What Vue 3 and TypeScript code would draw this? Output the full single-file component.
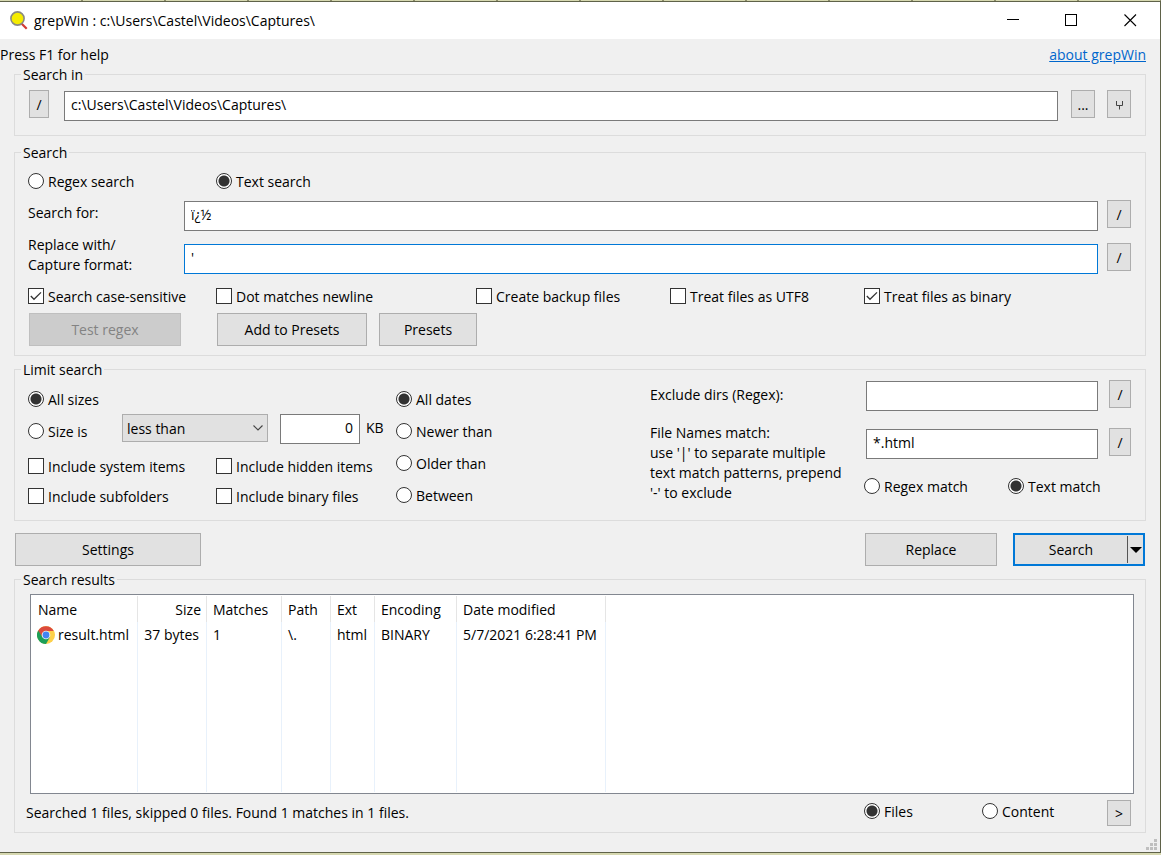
<script setup lang="ts">
import { ref } from 'vue'

interface ResultRow {
  name: string
  size: string
  matches: number
  path: string
  ext: string
  encoding: string
  modified: string
}

const searchPath = ref('c:\\Users\\Castel\\Videos\\Captures\\')
const searchMode = ref('text')
const searchFor = ref('ï¿½')
const replaceWith = ref("'")
const options = ref([
  { id: 'case', label: 'Search case-sensitive', on: true },
  { id: 'dot', label: 'Dot matches newline', on: false },
  { id: 'backup', label: 'Create backup files', on: false },
  { id: 'utf8', label: 'Treat files as UTF8', on: false },
  { id: 'binary', label: 'Treat files as binary', on: true },
])
const sizeMode = ref('all')
const sizeCompare = ref('less than')
const sizeValue = ref('0')
const includes = ref([
  { id: 'system', label: 'Include system items', on: false },
  { id: 'hidden', label: 'Include hidden items', on: false },
  { id: 'subfolders', label: 'Include subfolders', on: false },
  { id: 'binaries', label: 'Include binary files', on: false },
])
const dateMode = ref('All dates')
const dateModes = ['All dates', 'Newer than', 'Older than', 'Between']
const excludeDirs = ref('')
const fileNames = ref('*.html')
const nameMode = ref('text')
const view = ref('files')
const rows: ResultRow[] = [
  {
    name: 'result.html',
    size: '37 bytes',
    matches: 1,
    path: '\\.',
    ext: 'html',
    encoding: 'BINARY',
    modified: '5/7/2021 6:28:41 PM',
  },
]
</script>

<template>
  <div class="desktop">
    <main class="window">
      <header class="titlebar">
        <svg class="app-icon" width="20" height="20" viewBox="0 0 20 20" aria-hidden="true">
          <path d="M12.5 12.5 L17.7 17.7" stroke="#d33a32" stroke-width="2.2" />
          <circle cx="8.5" cy="7.5" r="6.6" fill="#f5ec00" stroke="#8a8a80" stroke-width="1.6" />
        </svg>
        <h1>grepWin : c:\Users\Castel\Videos\Captures\</h1>
        <button class="caption" aria-label="Minimize">
          <svg width="13" height="13" viewBox="0 0 13 13"><path d="M1 5.5H13" stroke="#000" /></svg>
        </button>
        <button class="caption" aria-label="Maximize">
          <svg width="13" height="13" viewBox="0 0 13 13"><rect x=".5" y=".5" width="11" height="11" fill="none" stroke="#000" /></svg>
        </button>
        <button class="caption" aria-label="Close">
          <svg width="13" height="13" viewBox="0 0 13 13"><path d="M.5 .5L12 12M12 .5L.5 12" stroke="#000" stroke-width="1.1" /></svg>
        </button>
      </header>

      <div class="help">
        <span>Press F1 for help</span>
        <a href="#about">about grepWin</a>
      </div>

      <fieldset class="group in-group">
        <legend>Search in</legend>
        <div class="path-row">
          <button class="btn mini" aria-label="Path history">/</button>
          <input v-model="searchPath" class="box" type="text" aria-label="Search in" />
          <button class="btn mini" aria-label="Browse">...</button>
          <button class="btn mini" aria-label="Branch">
            <svg width="7" height="9" viewBox="0 0 7 9"><path d="M.5 0V4.5H6.5V0M3.5 4.5V8.5" fill="none" stroke="#444" /></svg>
          </button>
        </div>
      </fieldset>

      <fieldset class="group search-group">
        <legend>Search</legend>
        <div class="mode-row">
          <label class="choice"><input v-model="searchMode" type="radio" name="mode" value="regex" />Regex search</label>
          <label class="choice"><input v-model="searchMode" type="radio" name="mode" value="text" />Text search</label>
        </div>
        <div class="field">
          <label for="search-for">Search for:</label>
          <input id="search-for" v-model="searchFor" class="box" type="text" />
          <button class="btn mini" aria-label="Edit search text">/</button>
        </div>
        <div class="field tall">
          <label for="replace-with">Replace with/<br />Capture format:</label>
          <input id="replace-with" v-model="replaceWith" class="box active" type="text" />
          <button class="btn mini" aria-label="Edit replacement">/</button>
        </div>
        <div class="option-row">
          <label v-for="o in options" :key="o.id" class="choice"><input v-model="o.on" type="checkbox" />{{ o.label }}</label>
        </div>
        <div class="preset-row">
          <button class="btn test" disabled>Test regex</button>
          <button class="btn add">Add to Presets</button>
          <button class="btn presets">Presets</button>
        </div>
      </fieldset>

      <fieldset class="group limit-group">
        <legend>Limit search</legend>
        <div class="limit-grid">
          <div class="sizes">
            <label class="choice"><input v-model="sizeMode" type="radio" name="size" value="all" />All sizes</label>
            <div class="size-row">
              <label class="choice"><input v-model="sizeMode" type="radio" name="size" value="is" />Size is</label>
              <span class="select">
                <select v-model="sizeCompare" aria-label="Size comparison">
                  <option>less than</option>
                  <option>equal to</option>
                  <option>greater than</option>
                </select>
                <svg width="10" height="6" viewBox="0 0 10 6" aria-hidden="true"><path d="M.5 .5L5 5L9.5 .5" fill="none" stroke="#444" stroke-width="1.1" /></svg>
              </span>
              <input id="size-value" v-model="sizeValue" class="box number" type="text" />
              <label for="size-value" class="unit">KB</label>
            </div>
            <div class="include-grid">
              <label v-for="i in includes" :key="i.id" class="choice"><input v-model="i.on" type="checkbox" />{{ i.label }}</label>
            </div>
          </div>
          <div class="dates">
            <label v-for="d in dateModes" :key="d" class="choice"><input v-model="dateMode" type="radio" name="date" :value="d" />{{ d }}</label>
          </div>
          <div class="names">
            <label for="exclude" class="exclude-label">Exclude dirs (Regex):</label>
            <div class="name-field">
              <input id="exclude" v-model="excludeDirs" class="box" type="text" />
              <button class="btn mini" aria-label="Exclude history">/</button>
            </div>
            <label for="file-names" class="names-label">File Names match:<br />use '|' to separate multiple<br />text match patterns, prepend<br />'-' to exclude</label>
            <div class="match">
              <div class="name-field">
                <input id="file-names" v-model="fileNames" class="box" type="text" />
                <button class="btn mini" aria-label="File name history">/</button>
              </div>
              <div class="match-modes">
                <label class="choice"><input v-model="nameMode" type="radio" name="names" value="regex" />Regex match</label>
                <label class="choice"><input v-model="nameMode" type="radio" name="names" value="text" />Text match</label>
              </div>
            </div>
          </div>
        </div>
      </fieldset>

      <div class="actions">
        <button class="btn settings">Settings</button>
        <button class="btn replace">Replace</button>
        <div class="split">
          <button class="split-main">Search</button>
          <button class="split-arrow" aria-label="More search actions">
            <svg width="12" height="6" viewBox="0 0 12 6"><path d="M0 0H12L6 6Z" fill="#000" /></svg>
          </button>
        </div>
      </div>

      <fieldset class="group results-group">
        <legend>Search results</legend>
        <div class="list">
          <table>
            <colgroup>
              <col class="c-name" /><col class="c-size" /><col class="c-matches" /><col class="c-path" />
              <col class="c-ext" /><col class="c-encoding" /><col class="c-date" />
            </colgroup>
            <thead>
              <tr>
                <th>Name</th>
                <th class="right">Size</th>
                <th>Matches</th>
                <th>Path</th>
                <th>Ext</th>
                <th>Encoding</th>
                <th>Date modified</th>
              </tr>
            </thead>
            <tbody>
              <tr v-for="r in rows" :key="r.name">
                <td>
                  <span class="file">
                    <svg width="18" height="18" viewBox="0 0 18 18" aria-hidden="true">
                      <circle cx="9" cy="9" r="9" fill="#fdd04a" />
                      <path d="M9 9L1.2 4.5A9 9 0 0 0 9 18L13 11Z" fill="#1c9f58" />
                      <path d="M1.2 4.5A9 9 0 0 1 16.8 4.9H9L5.4 11Z" fill="#dc4a3d" />
                      <circle cx="9" cy="9" r="4.3" fill="#f4f4f4" />
                      <circle cx="9" cy="9" r="3.4" fill="#4384f3" />
                    </svg>
                    {{ r.name }}
                  </span>
                </td>
                <td class="right">{{ r.size }}</td>
                <td>{{ r.matches }}</td>
                <td>{{ r.path }}</td>
                <td>{{ r.ext }}</td>
                <td>{{ r.encoding }}</td>
                <td>{{ r.modified }}</td>
              </tr>
              <tr class="rest" aria-hidden="true">
                <td v-for="n in 7" :key="n"></td>
              </tr>
            </tbody>
          </table>
        </div>
        <div class="status">
          <output>Searched 1 files, skipped 0 files. Found 1 matches in 1 files.</output>
          <label class="choice files"><input v-model="view" type="radio" name="view" value="files" />Files</label>
          <label class="choice content"><input v-model="view" type="radio" name="view" value="content" />Content</label>
          <button class="btn mini" aria-label="Next">&gt;</button>
        </div>
      </fieldset>

      <footer class="grip">
        <svg width="11" height="11" viewBox="0 0 11 11" fill="#bfbfbf" aria-hidden="true">
          <path d="M8 0h3v3h-3zM4 4h3v3h-3zM8 4h3v3h-3zM0 8h3v3h-3zM4 8h3v3h-3zM8 8h3v3h-3z" />
        </svg>
      </footer>
    </main>
  </div>
</template>

<style>
body {
  margin: 0;
}
</style>

<style scoped>
* {
  box-sizing: border-box;
}
.desktop {
  min-height: 100vh;
  display: flex;
  padding: 1px 0 2px;
  background: repeating-linear-gradient(90deg, #d6d8b0 0 81px, #8b8c6a 81px 83px);
  background-color: #d6d8b0;
  background-size: 100% 1px;
  background-repeat: no-repeat;
  font: 14px/20px "Open Sans", "Noto Sans", sans-serif;
  color: #000;
}
.window {
  flex: 1;
  min-width: 0;
  display: flex;
  flex-direction: column;
  background: #f0f0f0;
  border: solid #5f6249;
  border-width: 1px 1px 1px 0;
}
button,
input,
select {
  font: inherit;
  color: inherit;
  margin: 0;
}
.titlebar {
  display: flex;
  align-items: center;
  height: 37px;
  padding-left: 9px;
  background: #fff;
}
h1 {
  flex: 1;
  margin: 0 0 0 5px;
  font: inherit;
}
.caption {
  display: grid;
  place-items: center;
  width: 59px;
  height: 37px;
  padding: 0;
  border: 0;
  background: none;
}
.help {
  display: flex;
  justify-content: space-between;
  padding: 6px 14px 0 0;
}
.help a {
  color: #0066cc;
}
.group {
  display: flex;
  flex-direction: column;
  min-width: 0;
  margin: 0 14px;
  padding: 0 14px 0 13px;
  border: 1px solid #dcdcdc;
}
legend {
  margin-left: -7px;
  padding: 0 2px;
  height: 19px;
}
.box {
  min-width: 0;
  height: 30px;
  padding: 0 6px 4px;
  border: 1px solid #7a7a7a;
  border-radius: 0;
  background: #fff;
  outline: none;
}
.box.active {
  border-color: #0078d7;
}
.btn {
  height: 33px;
  padding: 0;
  border: 1px solid #adadad;
  border-radius: 0;
  background: #e1e1e1;
}
.btn:disabled {
  color: #838383;
  background: #cccccc;
  border-color: #bfbfbf;
}
.mini {
  flex: none;
  width: 24px;
  height: 28px;
  padding-top: 2px;
}
.choice {
  display: flex;
  align-items: flex-start;
  gap: 4px;
  height: 20px;
  line-height: 22px;
  white-space: nowrap;
}
.choice input {
  appearance: none;
  flex: none;
  width: 16px;
  height: 16px;
  margin-top: 2px;
  border: 1px solid #333;
  background: #fff;
}
.choice input[type="radio"] {
  border-radius: 50%;
}
.choice input[type="radio"]:checked {
  background: radial-gradient(circle, #333 0 5px, #fff 6px);
}
.choice input[type="checkbox"]:checked {
  background: #fff url("data:image/svg+xml,%3Csvg xmlns='http://www.w3.org/2000/svg' viewBox='0 0 14 14'%3E%3Cpath d='M1.8 7L5 10.3L12 3.4' fill='none' stroke='%23333' stroke-width='1.3'/%3E%3C/svg%3E");
}
.in-group {
  padding-bottom: 14px;
}
.path-row {
  display: flex;
  padding: 6px 0 0 1px;
}
.path-row .mini:first-child {
  width: 20px;
}
.path-row .box {
  flex: 1;
  margin: 1px 13px 0 15px;
}
.path-row .mini:last-child {
  margin-left: 12px;
}
.search-group {
  margin-top: 7px;
  padding-bottom: 9px;
}
.mode-row {
  display: grid;
  grid-template-columns: 188px 1fr;
  padding-top: 9px;
}
.field {
  display: grid;
  grid-template-columns: 156px 1fr 24px;
  align-items: start;
  margin-top: 9px;
}
.field label {
  margin-top: 3px;
}
.field .box {
  margin: 1px 9px 0 0;
}
.field.tall {
  align-items: end;
  margin-top: 4px;
}
.field.tall label,
.field.tall .box {
  margin-top: 0;
}
.field.tall .box {
  margin-bottom: 1px;
}
.field.tall .mini {
  margin-bottom: 4px;
}
.option-row {
  display: grid;
  grid-template-columns: 188px 260px 194px 194px 1fr;
  margin-top: 11px;
}
.preset-row {
  display: flex;
  padding: 7px 0 0 1px;
}
.test {
  width: 152px;
}
.add {
  width: 150px;
  margin: 0 12px 0 36px;
}
.presets {
  width: 98px;
}
.limit-group {
  margin-top: 4px;
  padding-bottom: 14px;
}
.limit-grid {
  display: grid;
  grid-template-columns: 368px 1fr 481px;
  padding-top: 1px;
}
.sizes,
.dates {
  padding-top: 9px;
}
.size-row {
  display: flex;
  align-items: flex-start;
  margin: 5px 0 12px;
}
.size-row .choice {
  width: 94px;
  margin-top: 7px;
}
.unit {
  margin-top: 4px;
}
.select {
  position: relative;
  width: 146px;
  height: 28px;
}
.select select {
  appearance: none;
  width: 100%;
  height: 100%;
  padding: 2px 20px 0 4px;
  border: 1px solid #adadad;
  border-radius: 0;
  background: #e1e1e1;
}
.select svg {
  position: absolute;
  right: 5px;
  top: 11px;
  pointer-events: none;
}
.number {
  width: 80px;
  margin: 0 6px 0 12px;
  text-align: right;
}
.include-grid {
  display: grid;
  grid-template-columns: 188px 1fr;
  row-gap: 10px;
}
.dates {
  display: flex;
  flex-direction: column;
  gap: 12px;
}
.names {
  display: grid;
  grid-template-columns: 214px 1fr;
  align-content: start;
}
.exclude-label {
  margin-top: 5px;
}
.names-label {
  margin-top: 12px;
  white-space: nowrap;
}
.name-field {
  display: flex;
  padding-left: 2px;
}
.name-field .box {
  flex: 1;
  margin: 1px 11px 0 0;
}
.name-field .mini {
  width: 22px;
}
.match {
  padding-top: 17px;
}
.match-modes {
  display: grid;
  grid-template-columns: 144px 1fr;
  margin-top: 17px;
}
.actions {
  display: flex;
  gap: 16px;
  margin: 12px 15px 4px;
}
.settings {
  width: 186px;
  margin-right: auto;
}
.replace {
  width: 132px;
}
.split {
  display: flex;
  width: 132px;
  height: 33px;
  padding: 1px 0;
  border: 2px solid #0078d7;
  background: #e1e1e1;
}
.split button {
  padding: 0;
  border: 0;
  background: none;
}
.split-main {
  flex: 1;
}
.split .split-arrow {
  display: grid;
  place-items: center;
  width: 16px;
  border-left: 1px solid #555;
}
.results-group {
  flex: 1;
  padding: 0 11px 6px;
}
.results-group legend {
  margin-left: -5px;
}
.list {
  flex: 1;
  display: flex;
  min-height: 120px;
  margin: 5px 0 6px 4px;
  padding: 1px 0;
  border: 1px solid #828790;
  background: #fff;
}
table {
  table-layout: fixed;
  width: 575px;
  border-collapse: separate;
  border-spacing: 0;
}
.c-name {
  width: 107px;
}
.c-size {
  width: 69px;
}
.c-matches {
  width: 75px;
}
.c-path {
  width: 49px;
}
.c-ext {
  width: 44px;
}
.c-encoding {
  width: 82px;
}
.c-date {
  width: 149px;
}
th,
td {
  height: 25px;
  padding: 0 0 0 6px;
  font-weight: normal;
  text-align: left;
  white-space: nowrap;
}
th {
  height: 26px;
  padding-top: 2px;
  border-right: 1px solid #e5e5e5;
}
td {
  border-right: 1px solid #e8f1fb;
}
th:first-child {
  padding-left: 7px;
}
.right {
  padding-left: 0;
  padding-right: 5px;
  text-align: right;
}
td.right {
  padding-right: 7px;
}
.file {
  display: flex;
  align-items: center;
  gap: 3px;
}
.rest td {
  height: auto;
}
.status {
  display: flex;
  align-items: flex-start;
  padding-right: 3px;
}
.status output {
  flex: 1;
  margin-top: 3px;
}
.files {
  width: 118px;
  margin-top: 1px;
}
.content {
  width: 125px;
  margin-top: 1px;
}
.status .mini {
  height: 26px;
}
.grip {
  display: flex;
  justify-content: flex-end;
  padding: 6px 3px 2px 0;
}
</style>
